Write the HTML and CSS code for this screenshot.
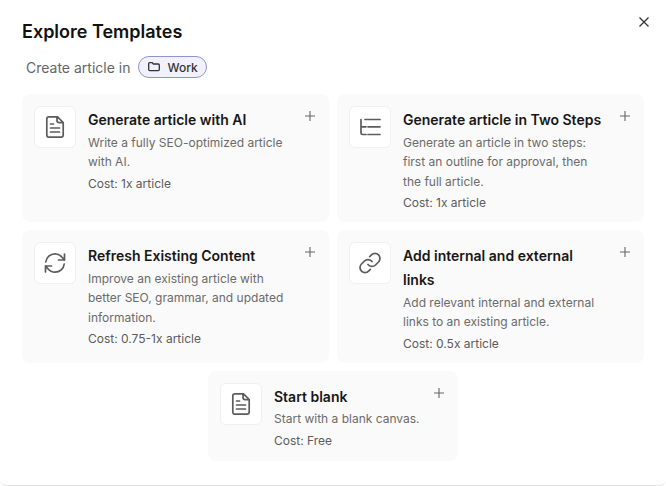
FILE: index.html
```html
<!DOCTYPE html>
<html>
	<head>
		<title>Explore Templates</title>
		<meta charset="UTF-8">
		<link rel="stylesheet" href="styles.css">
	</head>
	<body>
		<div class="dialog">
			<div class="header">
				<h1 class="title">Explore Templates</h1>
				<button class="close">
					<svg width="12" height="12" viewBox="0 0 12 12"><path d="M1.500 1.500l9 9M10.500 1.500l-9 9" /></svg>
				</button>
			</div>
			<div class="target">
				<span>Create article in</span>
				<span class="pill">
					<svg width="14" height="14" viewBox="0 0 14 14"><path d="M1.700 3.600c0-.6.4-1 1-1h2.500l1.200 1.400h4.900c.6 0 1 .4 1 1v4.600c0 .6-.4 1-1 1H2.700c-.6 0-1-.4-1-1z" /></svg>
					Work
				</span>
			</div>
			<div class="grid">
				<div class="card">
					<div class="icon">
						<svg width="24" height="24" viewBox="0 0 24 24"><path d="M3.800 4c0-1.300.9-2.200 2.200-2.200h8.500l5.700 5.700V20c0 1.300-.9 2.200-2.200 2.200H6c-1.300 0-2.200-.9-2.200-2.200zM14 2v3.500c0 1.300.8 2.100 2.100 2.100H20M7.500 9h3M7.500 13h9M7.500 17h9" /></svg>
					</div>
					<div class="body">
						<div class="name">Generate article with AI</div>
						<div class="desc">Write a fully SEO-optimized article with AI.</div>
						<div class="cost">Cost: 1x article</div>
					</div>
					<svg class="plus" width="12" height="12" viewBox="0 0 12 12"><path d="M6 1v10M1 6h10" /></svg>
				</div>
				<div class="card">
					<div class="icon">
						<svg width="24" height="24" viewBox="0 0 24 24"><path d="M3 4.500V18c0 1 .5 1.500 1.500 1.500H8M3 11.800h5M7 4.500h15M10 11.800h12M10 19.500h12" /></svg>
					</div>
					<div class="body">
						<div class="name">Generate article in Two Steps</div>
						<div class="desc">Generate an article in two steps: first an outline for approval, then the full article.</div>
						<div class="cost">Cost: 1x article</div>
					</div>
					<svg class="plus" width="12" height="12" viewBox="0 0 12 12"><path d="M6 1v10M1 6h10" /></svg>
				</div>
				<div class="card">
					<div class="icon">
						<svg width="24" height="24" viewBox="0 0 24 24"><path d="M2.800 11C3.300 6.300 7.200 2.800 12 2.800c3 0 5.500 1.500 7.300 3.700L21.500 9M21.500 3v6h-6M21.200 13c-.5 4.700-4.400 8.200-9.200 8.200-3 0-5.500-1.500-7.300-3.700L2.500 15M2.500 21v-6h6" /></svg>
					</div>
					<div class="body">
						<div class="name">Refresh Existing Content</div>
						<div class="desc">Improve an existing article with better SEO, grammar, and updated information.</div>
						<div class="cost">Cost: 0.75-1x article</div>
					</div>
					<svg class="plus" width="12" height="12" viewBox="0 0 12 12"><path d="M6 1v10M1 6h10" /></svg>
				</div>
				<div class="card">
					<div class="icon">
						<svg width="24" height="24" viewBox="0 0 24 24"><path d="M10 13.500a5 5 0 0 0 7.500.5l3-3a5 5 0 0 0-7.100-7.100l-1.700 1.700M14 10.500a5 5 0 0 0-7.500-.5l-3 3a5 5 0 0 0 7.100 7.100l1.700-1.700" /></svg>
					</div>
					<div class="body">
						<div class="name">Add internal and external links</div>
						<div class="desc">Add relevant internal and external links to an existing article.</div>
						<div class="cost">Cost: 0.5x article</div>
					</div>
					<svg class="plus" width="12" height="12" viewBox="0 0 12 12"><path d="M6 1v10M1 6h10" /></svg>
				</div>
				<div class="card card-blank">
					<div class="icon">
						<svg width="24" height="24" viewBox="0 0 24 24"><path d="M3.800 4c0-1.300.9-2.200 2.200-2.200h8.500l5.700 5.700V20c0 1.300-.9 2.200-2.200 2.200H6c-1.300 0-2.200-.9-2.200-2.200zM14 2v3.500c0 1.300.8 2.100 2.100 2.100H20M7.500 9h3M7.500 13h9M7.500 17h9" /></svg>
					</div>
					<div class="body">
						<div class="name">Start blank</div>
						<div class="desc">Start with a blank canvas.</div>
						<div class="cost">Cost: Free</div>
					</div>
					<svg class="plus" width="12" height="12" viewBox="0 0 12 12"><path d="M6 1v10M1 6h10" /></svg>
				</div>
			</div>
		</div>
	</body>
</html>
```
FILE: styles.css
```css
html, body {
	margin: 0;
	height: 100%;
	background: #fff;
	font-family: Inter, "Liberation Sans", sans-serif;
	overflow: hidden;
}

svg {
	fill: none;
	stroke: currentColor;
	flex: none;
}

.dialog {
	box-sizing: border-box;
	height: 486px;
	padding: 17px 22px 0;
	border-bottom: 1px solid #e3e3e3;
	border-radius: 0 0 6px 6px;
}

.header {
	display: flex;
	justify-content: space-between;
	align-items: flex-start;
}

.title {
	margin: 0;
	font-size: 18px;
	font-weight: 600;
	line-height: 30px;
	color: #111;
}

.close {
	margin: -1px -6px 0 0;
	padding: 0;
	width: 12px;
	height: 12px;
	border: 0;
	background: none;
	color: #333;
	line-height: 0;
}

.close svg {
	stroke-width: 1.3;
}

.target {
	display: flex;
	align-items: center;
	gap: 8px;
	margin: 9px 0 16px 4px;
	font-size: 14px;
	color: #666;
}

.pill {
	display: flex;
	align-items: center;
	gap: 6px;
	box-sizing: border-box;
	height: 22px;
	padding: 0 8px;
	border: 1px solid #8f93d6;
	border-radius: 11px;
	background: #f1f1fb;
	font-size: 12px;
	font-weight: 500;
	color: #333;
}

.pill svg {
	stroke-width: 1.3;
}

.grid {
	display: grid;
	grid-template-columns: 307px 307px;
	gap: 8px;
}

.card {
	display: flex;
	align-items: flex-start;
	gap: 12px;
	padding: 12px 12px 9.500px;
	border-radius: 8px;
	background: #fafafa;
}

.card-blank {
	grid-column: 1 / 3;
	justify-self: center;
	box-sizing: border-box;
	width: 250px;
	padding-bottom: 11px;
}

.icon {
	display: flex;
	align-items: center;
	justify-content: center;
	flex: none;
	box-sizing: border-box;
	width: 42px;
	height: 42px;
	border: 1px solid #f0f0f0;
	border-radius: 6px;
	background: #fff;
	color: #5c5c5c;
}

.icon svg {
	stroke-width: 1.7;
	stroke-linecap: round;
	stroke-linejoin: round;
}

.body {
	flex: 1;
	min-width: 0;
}

.name {
	margin: 2px 0 0.500px;
	font-size: 14px;
	font-weight: 600;
	line-height: 24px;
	color: #171717;
}

.desc {
	font-size: 12px;
	line-height: 19.500px;
	color: #6b6b6b;
}

.cost {
	margin-top: 2px;
	font-size: 12px;
	line-height: 19.500px;
	color: #5c5c5c;
}

.plus {
	margin: 4px 1px 0 1px;
	color: #666;
	stroke-width: 1.1;
}
```
